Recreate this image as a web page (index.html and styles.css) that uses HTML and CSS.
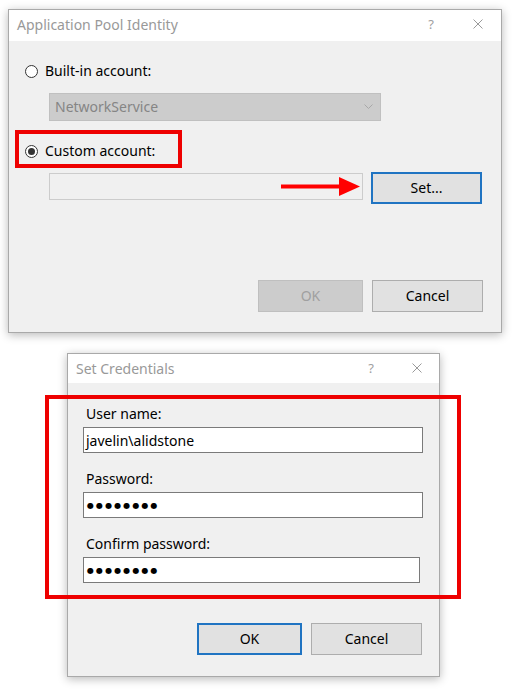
FILE: index.html
```html
<!DOCTYPE html>
<html>
<head>
<meta charset="utf-8">
<link rel="stylesheet" href="styles.css">
</head>
<body>
<div class="page">
  <div class="dialog d1">
    <div class="titlebar">
      <span class="title">Application Pool Identity</span>
      <span class="help">?</span>
      <svg class="close" width="10" height="10" viewBox="0 0 10 10"><path d="M0.5 0.5 L9.5 9.5 M9.5 0.5 L0.5 9.5" stroke="#9a9a9a" stroke-width="1" fill="none"/></svg>
    </div>
    <div class="body b1">
      <div class="radio-row">
        <span class="radio"></span>
        <span class="label">Built-in account:</span>
      </div>
      <div class="select">
        <span>NetworkService</span>
        <svg width="9" height="5" viewBox="0 0 9 5"><path d="M0.5 0.5 L4.5 4.5 L8.5 0.5" stroke="#a8a8a8" stroke-width="1" fill="none"/></svg>
      </div>
      <div class="radio-row r2">
        <span class="radio checked"></span>
        <span class="label">Custom account:</span>
      </div>
      <div class="set-row">
        <div class="textbox"></div>
        <div class="btn focus set">Set...</div>
      </div>
      <div class="btn-row br1">
        <div class="btn disabled ok1">OK</div>
        <div class="btn cancel">Cancel</div>
      </div>
    </div>
  </div>

  <div class="dialog d2">
    <div class="titlebar t2">
      <span class="title">Set Credentials</span>
      <span class="help">?</span>
      <svg class="close" width="10" height="10" viewBox="0 0 10 10"><path d="M0.5 0.5 L9.5 9.5 M9.5 0.5 L0.5 9.5" stroke="#9a9a9a" stroke-width="1" fill="none"/></svg>
    </div>
    <div class="body b2">
      <div class="flabel">User name:</div>
      <div class="input">javelin\alidstone</div>
      <div class="flabel">Password:</div>
      <div class="input dots">●●●●●●●●</div>
      <div class="flabel">Confirm password:</div>
      <div class="input dots narrow">●●●●●●●●</div>
      <div class="btn-row br2">
        <div class="btn focus ok2">OK</div>
        <div class="btn cancel">Cancel</div>
      </div>
    </div>
  </div>

  <div class="redbox rb1"></div>
  <div class="redbox rb2"></div>
  <svg class="arrow" width="80" height="20" viewBox="0 0 80 20"><rect x="0" y="7.5" width="60" height="4" fill="#f00"/><path d="M58 0 L79 9.5 L58 19 Z" fill="#f00"/></svg>
</div>
</body>
</html>
```
FILE: styles.css
```css
* { box-sizing: border-box; }
html, body { margin: 0; padding: 0; background: #fff; }
body {
  font-family: "Noto Sans", "Open Sans", sans-serif;
  font-size: 14px;
  color: #000;
}
.page {
  position: relative;
  width: 514px;
  height: 696px;
  padding-top: 9px;
  display: flex;
  flex-direction: column;
}
.dialog {
  background: #f0f0f0;
  border: 1px solid #a9a9a9;
  box-shadow: 0 2px 9px rgba(0,0,0,0.28);
  display: flex;
  flex-direction: column;
}
.d1 { margin-left: 8px; width: 494px; }
.d2 { margin-left: 67px; margin-top: 20px; width: 373px; }

.titlebar {
  background: #fff;
  height: 31px;
  display: flex;
  align-items: center;
  padding-left: 8px;
  padding-bottom: 3px;
  color: #999;
  font-size: 14px;
}
.t2 { height: 29px; padding-bottom: 1px; }
.title { flex: 1; }
.help { font-size: 13px; color: #a0a0a0; }
.d1 .help { margin-right: 39px; }
.d2 .help { margin-right: 38px; }
.close { margin-right: 18px; }
.d2 .close { margin-right: 17px; }

.body { display: flex; flex-direction: column; }
.b1 { padding: 20px 18px 20px 16px; }

.radio-row { display: flex; align-items: center; height: 20px; }
.radio-row .label { position: relative; top: -1px; }
.r2 { margin-top: 20px; }
.radio {
  width: 13px; height: 13px;
  border: 1px solid #333;
  border-radius: 50%;
  background: #fff;
  margin-right: 7px;
  display: flex; align-items: center; justify-content: center;
}
.radio.checked::after {
  content: "";
  width: 7px; height: 7px;
  border-radius: 50%;
  background: #333;
}
.select {
  margin-top: 12px;
  margin-left: 24px;
  width: 332px;
  height: 28px;
  background: #cccccc;
  border: 1px solid #c0c0c0;
  color: #858585;
  display: flex;
  align-items: center;
  justify-content: space-between;
  padding: 0 7px 1px 5px;
}
.set-row { display: flex; align-items: flex-start; margin-top: 11px; }
.textbox {
  margin-left: 24px;
  margin-top: 1px;
  width: 314px;
  height: 27px;
  background: #f0f0f0;
  border: 1px solid #cccccc;
}
.btn {
  height: 32px;
  display: flex;
  align-items: center;
  justify-content: center;
  padding-bottom: 1px;
  background: #e1e1e1;
  border: 1px solid #adadad;
  color: #000;
}
.btn.focus { border: 2px solid #2074c2; }
.btn.disabled { background: #cccccc; border-color: #bfbfbf; color: #a0a0a0; }
.set { width: 111px; margin-left: 8px; }
.btn-row { display: flex; justify-content: flex-end; }
.br1 { margin-top: 76px; }
.ok1 { width: 105px; margin-right: 9px; }
.cancel { width: 111px; }

.b2 { padding: 20px 17px 21px 15px; }
.flabel { height: 20px; line-height: 21px; padding-left: 3px; }
.input {
  margin-top: 4px;
  margin-bottom: 15px;
  width: 340px;
  height: 26px;
  background: #fff;
  border: 1px solid #7a7a7a;
  display: flex;
  align-items: center;
  padding-left: 2px;
}
.input.narrow { width: 337px; margin-bottom: 0; }
.dots {
  font-family: "DejaVu Sans", sans-serif;
  font-size: 8px;
  letter-spacing: 2.1px;
  padding-left: 3px;
}
.br2 { margin-top: 40px; }
.ok2 { width: 105px; margin-right: 9px; }

.redbox { position: absolute; border: 4px solid #ee0000; }
.rb1 { left: 15px; top: 130px; width: 167px; height: 38px; }
.rb2 { left: 45px; top: 395px; width: 416px; height: 204px; }
.arrow { position: absolute; left: 281px; top: 177px; }
```
